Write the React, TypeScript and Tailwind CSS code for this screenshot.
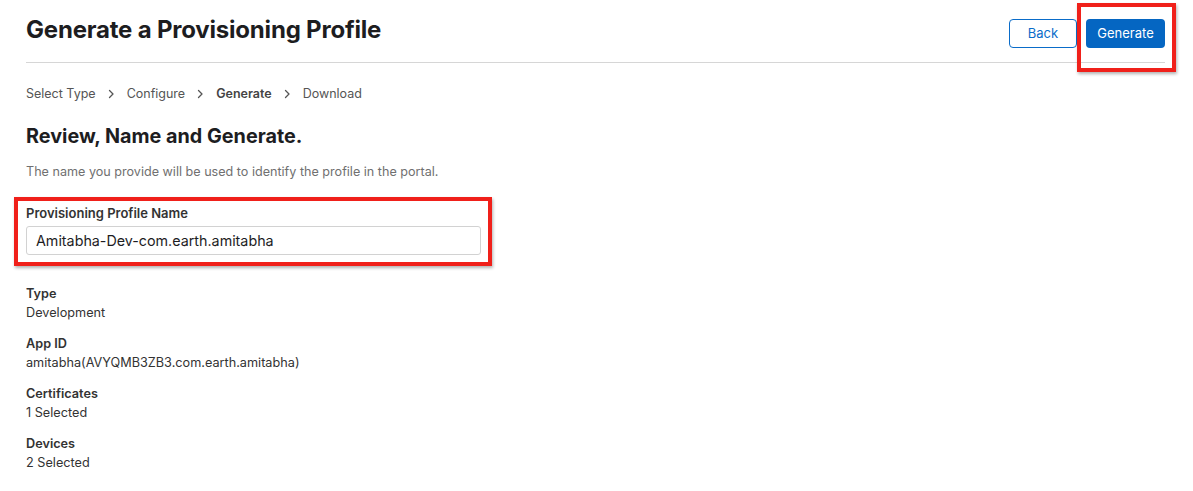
import React from "react";

function Chevron() {
  return (
    <svg width="7" height="10" viewBox="0 0 7 10" className="mx-[12px]" fill="none">
      <path d="M1.5 1.5 L5 5 L1.5 8.5" stroke="#555" strokeWidth="1.3" strokeLinecap="round" strokeLinejoin="round" />
    </svg>
  );
}

function Field({ label, value }: { label: string; value: string }) {
  return (
    <div className="flex flex-col">
      <div className="text-[12.7px] font-semibold leading-[19px] text-[#333]">{label}</div>
      <div className="text-[12.7px] leading-[19px] text-[#333]">{value}</div>
    </div>
  );
}

export default function App() {
  return (
    <div
      className="relative w-[1193px] h-[491px] bg-white overflow-hidden"
      style={{ fontFamily: "Inter, 'Noto Sans', sans-serif" }}
    >
      <div className="pl-[26px] pr-[28px]">
        <div className="flex items-start justify-between h-[63px] border-b border-[#d6d6d6]">
          <h1 className="mt-[15px] text-[24px] leading-[30px] font-bold text-[#1d1d1f] tracking-[-0.2px]">
            Generate a Provisioning Profile
          </h1>
          <div className="mt-[19px] flex items-center gap-[9px]">
            <button className="h-[29px] w-[68px] rounded-[4px] border border-[#0a6cc9] text-[#0a6cc9] text-[13px] bg-white">
              Back
            </button>
            <button className="h-[29px] w-[79px] rounded-[4px] bg-[#0566c2] text-white text-[13px]">
              Generate
            </button>
          </div>
        </div>

        <div className="flex items-center h-[22px] mt-[20px] text-[12.5px] text-[#555]">
          <span>Select Type</span>
          <Chevron />
          <span>Configure</span>
          <Chevron />
          <span className="font-semibold text-[#444]">Generate</span>
          <Chevron />
          <span>Download</span>
        </div>

        <h2 className="mt-[18px] text-[19.8px] font-bold text-[#1d1d1f] leading-[26px]">
          Review, Name and Generate.
        </h2>

        <p className="mt-[14px] text-[12.6px] text-[#707070] leading-[18px]">
          The name you provide will be used to identify the profile in the portal.
        </p>

        <div className="mt-[23px] w-[455px]">
          <div className="text-[13px] font-semibold leading-[18px] text-[#333]">Provisioning Profile Name</div>
          <div className="mt-[4px] h-[29px] rounded-[3px] border border-[#d2d2d2] flex items-center px-[9px] text-[14.3px] text-[#1d1d1f]">
            Amitabha-Dev-com.earth.amitabha
          </div>
        </div>

        <div className="mt-[29px] flex flex-col gap-[12px]">
          <Field label="Type" value="Development" />
          <Field label="App ID" value="amitabha(AVYQMB3ZB3.com.earth.amitabha)" />
          <Field label="Certificates" value="1 Selected" />
          <Field label="Devices" value="2 Selected" />
        </div>
      </div>

      <div className="absolute left-[1077px] top-[3px] w-[99px] h-[69px] border-[4px] border-[#f0201a] shadow-[1px_2px_3px_rgba(0,0,0,0.3)]" />
      <div className="absolute left-[14px] top-[197px] w-[478px] h-[69px] border-[4px] border-[#f0201a] shadow-[1px_2px_3px_rgba(0,0,0,0.3)]" />
    </div>
  );
}
